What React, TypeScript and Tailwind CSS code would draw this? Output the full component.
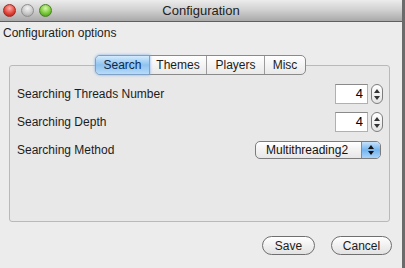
import React from 'react';

const font = { fontFamily: '"Lucida Grande", "Liberation Sans", Arial, sans-serif' };

const Light: React.FC<{ color: 'red' | 'gray' | 'green' }> = ({ color }) => {
  const cls =
    color === 'red'
      ? 'bg-[radial-gradient(circle_at_50%_30%,#ffb0a8,#e2463c_55%,#a8130d)] border-[#9a2a24]'
      : color === 'green'
      ? 'bg-[radial-gradient(circle_at_50%_30%,#d8f7a8,#78c83c_55%,#3f8a12)] border-[#4c7f26]'
      : 'bg-[radial-gradient(circle_at_50%_30%,#f4f4f4,#c9c9c9_55%,#9a9a9a)] border-[#8e8e8e]';
  return <div className={`w-[13px] h-[13px] rounded-full border ${cls}`} />;
};

const Stepper = () => (
  <div className="w-[12px] h-[20px] rounded-[6px] border border-[#7d7d7d] bg-gradient-to-b from-white to-[#e4e4e4] flex flex-col items-center justify-center gap-[3px]">
    <div className="w-0 h-0 border-l-[3px] border-r-[3px] border-b-[4px] border-l-transparent border-r-transparent border-b-[#333]" />
    <div className="w-0 h-0 border-l-[3px] border-r-[3px] border-t-[4px] border-l-transparent border-r-transparent border-t-[#333]" />
  </div>
);

const NumberField: React.FC<{ value: string }> = ({ value }) => (
  <div className="flex items-center gap-[3px]">
    <div className="w-[33px] h-[20px] bg-white border border-[#b0b0b0] border-t-[#8a8a8a] flex items-center justify-end pr-[4px] text-[13px] text-black">
      {value}
    </div>
    <Stepper />
  </div>
);

const tabs = ['Search', 'Themes', 'Players', 'Misc'];
const tabW = ['w-[53px]', 'w-[57px]', 'w-[58px]', 'w-[41px]'];

export default function App() {
  return (
    <div className="w-[405px] h-[268px] bg-[#ececec] flex flex-col text-[#1c1c1c] border-r-[3px] border-r-[#6b6b6b]" style={font}>
      {/* title bar */}
      <div className="h-[22px] bg-gradient-to-b from-[#ececec] via-[#cfcfcf] to-[#a9a9a9] border-b border-[#5f5f5f] flex items-center relative">
        <div className="flex items-center gap-[5px] pl-[3px]">
          <Light color="red" />
          <Light color="gray" />
          <Light color="green" />
        </div>
        <div className="absolute inset-0 flex items-center justify-center text-[13px] text-[#222]">Configuration</div>
      </div>

      <div className="pl-[3px] pt-[2px] text-[12px] leading-[18px]">Configuration options</div>

      {/* tab area */}
      <div className="mt-[13px] ml-[9px] mr-[12px] relative">
        <div className="absolute left-[86px] top-0 flex h-[20px] rounded-[5px] border border-[#8a8a8a] bg-gradient-to-b from-white to-[#e9e9e9] z-10 text-[12px]">
          {tabs.map((t, i) => (
            <div
              key={t}
              className={`${tabW[i]} flex items-center justify-center ${i > 0 ? 'border-l border-[#9c9c9c]' : ''} ${
                i === 0
                  ? 'rounded-l-[4px] bg-gradient-to-b from-[#d4ebfc] via-[#8ec2ef] to-[#b8dbf8] shadow-[0_0_3px_1px_#7aaee8] text-[#0d2a4a]'
                  : ''
              }`}
            >
              {t}
            </div>
          ))}
        </div>
        <div className="mt-[10px] h-[157px] border border-[#b9b9b9] rounded-[3px] bg-[#e8e8e8] pt-[18px] pl-[7px] pr-[6px] flex flex-col gap-[8px] text-[12px]">
          <div className="flex items-center justify-between h-[20px]">
            <span>Searching Threads Number</span>
            <NumberField value="4" />
          </div>
          <div className="flex items-center justify-between h-[20px]">
            <span>Searching Depth</span>
            <NumberField value="4" />
          </div>
          <div className="flex items-center justify-between h-[20px]">
            <span>Searching Method</span>
            <div className="w-[126px] h-[18px] mr-[2px] rounded-[5px] border border-[#7c7c7c] bg-gradient-to-b from-white to-[#e6e6e6] flex items-stretch overflow-hidden">
              <div className="flex-1 flex items-center pl-[10px] text-[12px] text-[#111]">Multithreading2</div>
              <div className="w-[19px] bg-gradient-to-b from-[#c6e2fb] via-[#72b4ef] to-[#a9d3fa] border-l border-[#6d8fb5] flex flex-col items-center justify-center gap-[2px]">
                <div className="w-0 h-0 border-l-[3px] border-r-[3px] border-b-[4px] border-l-transparent border-r-transparent border-b-[#111]" />
                <div className="w-0 h-0 border-l-[3px] border-r-[3px] border-t-[4px] border-l-transparent border-r-transparent border-t-[#111]" />
              </div>
            </div>
          </div>
        </div>
      </div>

      {/* buttons */}
      <div className="flex justify-end gap-[16px] mt-[14px] pr-[10px] text-[12px]">
        <button className="w-[53px] h-[19px] rounded-full border border-[#6f6f6f] bg-gradient-to-b from-white to-[#e2e2e2] flex items-center justify-center">Save</button>
        <button className="w-[61px] h-[19px] rounded-full border border-[#6f6f6f] bg-gradient-to-b from-white to-[#e2e2e2] flex items-center justify-center">Cancel</button>
      </div>
    </div>
  );
}
